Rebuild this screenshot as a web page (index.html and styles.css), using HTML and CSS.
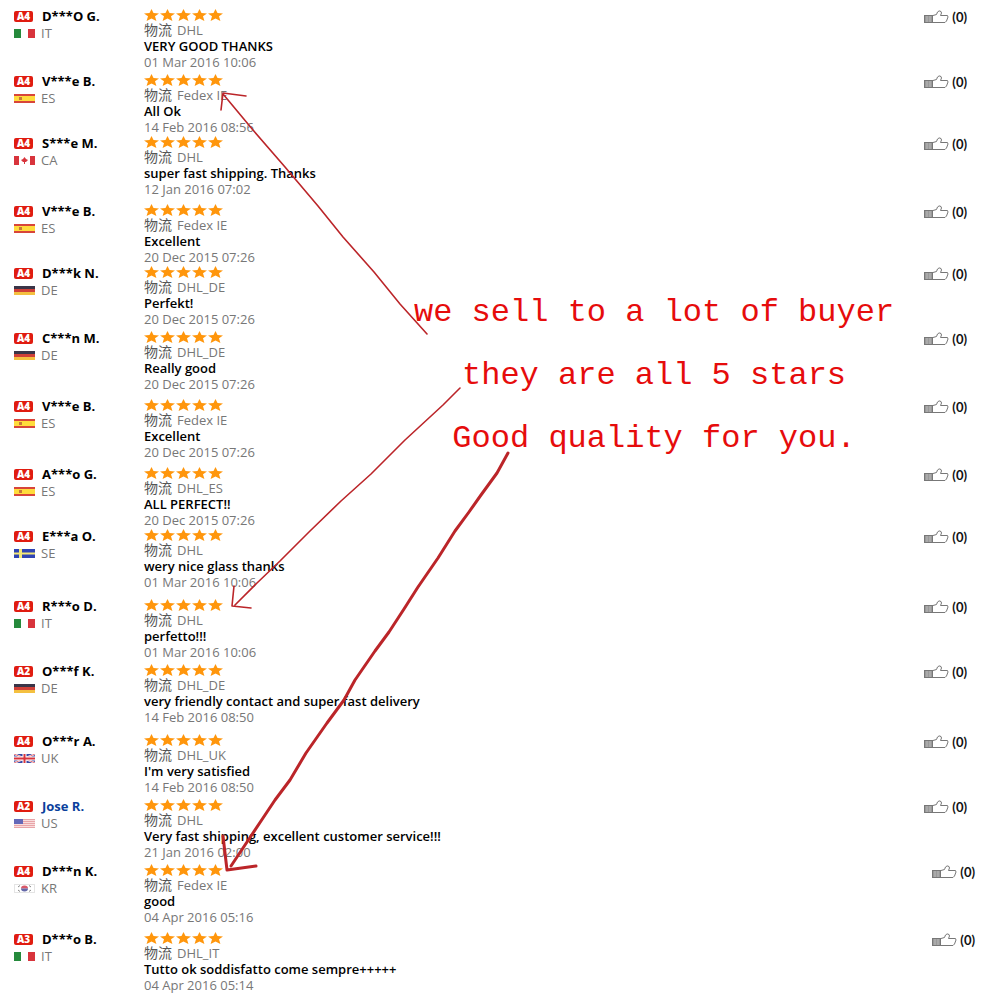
FILE: index.html
```html
<!DOCTYPE html>
<html lang="en">
<head>
  <meta charset="UTF-8">
  <meta name="viewport" content="width=device-width, initial-scale=1.0">
  <title>Buyer Feedback</title>
  <link rel="stylesheet" href="styles.css">
</head>
<body>
  <!-- Shared icons -->
  <svg class="sprite" aria-hidden="true">
    <symbol id="star" viewBox="0 0 15 12" preserveAspectRatio="none">
      <path d="M7.5 0L9.5 4L15 4.4L11 7.2L12.4 12L7.5 9.6L2.6 12L4 7.2L0 4.4L5.5 4Z" fill="#ff960c"/>
    </symbol>
    <symbol id="thumb" viewBox="0 0 25 14">
      <path d="M9 5.5L12.5 4.5L13.5 2Q15 0 17 1.5L17.5 3L16.5 5.5H23.5L24 7L22.5 11L21 12.5H9" fill="#fff" stroke="#777"/>
      <rect x="0.5" y="5.5" width="8" height="7" fill="#999" stroke="#777"/>
      <path d="M3 6V12M6 6V12" stroke="#bbb"/>
    </symbol>
    <symbol id="flag-IT" viewBox="0 0 21 9" preserveAspectRatio="none">
      <rect width="21" height="9" fill="#fff"/>
      <rect width="7" height="9" fill="#258a3c"/>
      <rect x="14" width="7" height="9" fill="#d8343c"/>
    </symbol>
    <symbol id="flag-ES" viewBox="0 0 21 9" preserveAspectRatio="none">
      <rect width="21" height="9" fill="#d8453a"/>
      <rect y="2" width="21" height="5" fill="#ffdc3c"/>
      <rect x="5" y="3" width="3" height="3" fill="#c87838"/>
    </symbol>
    <symbol id="flag-CA" viewBox="0 0 21 9" preserveAspectRatio="none">
      <rect width="21" height="9" fill="#fff"/>
      <path d="M0 0H5V9H0ZM16 0H21V9H16ZM10.5 1L12 3L14 4L12 6H11V8H10V6H9L7 4L9 3Z" fill="#d8343c"/>
    </symbol>
    <symbol id="flag-DE" viewBox="0 0 21 9" preserveAspectRatio="none">
      <rect width="21" height="3" fill="#3a3548"/>
      <rect y="3" width="21" height="3" fill="#d04038"/>
      <rect y="6" width="21" height="3" fill="#f4c040"/>
    </symbol>
    <symbol id="flag-SE" viewBox="0 0 21 9" preserveAspectRatio="none">
      <rect width="21" height="9" fill="#2f44b4"/>
      <path d="M5 0H8V9H5ZM0 3.5H21V5.5H0Z" fill="#f4e878"/>
    </symbol>
    <symbol id="flag-UK" viewBox="0 0 21 9" preserveAspectRatio="none">
      <rect width="21" height="9" fill="#3a48a4"/>
      <path d="M0 0L21 9M21 0L0 9" stroke="#fff" stroke-width="2"/>
      <path d="M0 0L21 9M21 0L0 9" stroke="#d8343c" stroke-width="0.7"/>
      <path d="M10.5 0V9M0 4.5H21" stroke="#fff" stroke-width="4"/>
      <path d="M10.5 0V9M0 4.5H21" stroke="#d8343c" stroke-width="2"/>
    </symbol>
    <symbol id="flag-US" viewBox="0 0 21 9" preserveAspectRatio="none">
      <rect width="21" height="9" fill="#f8dcdc"/>
      <path d="M0 0.5H21M0 2.5H21M0 4.5H21M0 6.5H21M0 8.5H21" stroke="#e8a4a8"/>
      <rect width="9" height="5" fill="#6468b8"/>
    </symbol>
    <symbol id="flag-KR" viewBox="0 0 21 9" preserveAspectRatio="none">
      <rect x="0.5" y="0.5" width="20" height="8" fill="#fff" stroke="#e4e4e4"/>
      <path d="M4 3L6 1.5M4 6L6 7.5M15 1.5L17 3M15 7.5L17 6" stroke="#888"/>
      <path d="M7 4.5A3.5 3 0 0 1 14 4.5Z" fill="#d85868"/>
      <path d="M7 4.5A3.5 3 0 0 0 14 4.5Z" fill="#6468a8"/>
    </symbol>
  </svg>

  <main class="page">
    <ul id="feedbackList" class="feedback-list"></ul>

    <!-- Seller note drawn over the list -->
    <div class="note">
      <p>we sell to a lot of buyer</p>
      <p>they are all 5 stars</p>
      <p>Good quality for you.</p>
    </div>
    <svg class="arrows" viewBox="0 0 1000 1000" aria-hidden="true">
      <g fill="none" stroke="#bb2529" stroke-linecap="round" stroke-linejoin="round">
        <path d="M427 334L400 304L374 272L343 237L318 206L285 167L253 130L223 94M221 110L223 93L246 96" stroke-width="1.6"/>
        <path d="M460 388L443 405L405 440L371 474L341 501L310 531L280 561L257 583L235 605M234 586L232 606L251 608" stroke-width="1.6"/>
        <path d="M508 453L497 473L481 495L469 512L455 531L438 558L418 587L404 609L389 632L375 651L355 680L344 700L327 723L306 753L290 780L275 800L263 818L247 842L231 866" stroke-width="3"/>
        <path d="M223 836L227 870L256 866" stroke-width="3"/>
      </g>
    </svg>
  </main>

  <script src="script.js"></script>
</body>
</html>
```
FILE: styles.css
```css
* {
  box-sizing: border-box;
}

body {
  margin: 0;
  background-color: #fff;
  color: #111;
  font-family: "Open Sans", "Noto Sans CJK SC", sans-serif;
  font-size: 13px;
  line-height: 16px;
}

p {
  margin: 0;
}

.sprite {
  display: none;
}

.page {
  position: relative;
  padding: 8px 33px 8px 14px;
}

.feedback-list {
  list-style: none;
  margin: 0;
  padding: 0;
}

.feedback {
  display: flex;
}

/* Space below a row */
.gap-small {
  margin-bottom: 3px;
}

.gap-medium {
  margin-bottom: 6px;
}

.gap-large {
  margin-bottom: 8px;
}

/* Buyer */
.buyer {
  flex: 0 0 130px;
}

.buyer-line {
  display: flex;
  align-items: center;
  gap: 9px;
  height: 16px;
  white-space: nowrap;
}

.buyer-country {
  gap: 6px;
  height: 18px;
  color: #777;
}

.level {
  width: 19px;
  height: 11px;
  border-radius: 2px;
  background-color: #e01c10;
  color: #fff;
  font-size: 10px;
  font-weight: 800;
  line-height: 11px;
  text-align: center;
}

.buyer-name {
  color: #000;
  font-weight: 700;
  text-decoration: none;
}

a.buyer-name {
  color: #0a3f9c;
}

.flag {
  width: 21px;
  height: 9px;
}

/* Feedback text */
.feedback-body {
  flex: 1;
}

.stars {
  display: flex;
  align-items: center;
  gap: 1px;
  height: 14px;
}

.stars svg {
  width: 15px;
  height: 12px;
}

.shipping {
  display: flex;
  align-items: center;
  gap: 5px;
  height: 16px;
  color: #777;
}

.shipping span {
  color: #555;
  font-size: 14px;
}

.comment {
  color: #000;
  font-weight: 600;
}

.date {
  color: #777;
}

/* Like button */
.like {
  display: flex;
  align-items: center;
  align-self: flex-start;
  gap: 3px;
  height: 18px;
  padding: 0;
  border: 0;
  background: none;
  color: #111;
  font-family: Lato, sans-serif;
  font-size: 13px;
  font-weight: 700;
  cursor: pointer;
}

.like svg {
  width: 25px;
  height: 14px;
}

.shifted .like {
  margin-right: -8px;
}

/* Seller note */
.note {
  position: absolute;
  top: 281px;
  left: 414px;
  width: 480px;
  color: #e60c0c;
  font-family: "Liberation Mono", monospace;
  font-size: 32px;
  line-height: 63px;
  text-align: center;
  white-space: nowrap;
}

.arrows {
  position: absolute;
  top: 0;
  left: 0;
  width: 1000px;
  height: 1000px;
  pointer-events: none;
}
```
FILE: script.js
```js
var feedback = [
  { level: "A4", name: "D***O G.", country: "IT", ship: "DHL", text: "VERY GOOD THANKS", date: "01 Mar 2016 10:06", css: "gap-small" },
  { level: "A4", name: "V***e B.", country: "ES", ship: "Fedex IE", text: "All Ok", date: "14 Feb 2016 08:56", css: "" },
  { level: "A4", name: "S***e M.", country: "CA", ship: "DHL", text: "super fast shipping. Thanks", date: "12 Jan 2016 07:02", css: "gap-medium" },
  { level: "A4", name: "V***e B.", country: "ES", ship: "Fedex IE", text: "Excellent", date: "20 Dec 2015 07:26", css: "" },
  { level: "A4", name: "D***k N.", country: "DE", ship: "DHL_DE", text: "Perfekt!", date: "20 Dec 2015 07:26", css: "gap-small" },
  { level: "A4", name: "C***n M.", country: "DE", ship: "DHL_DE", text: "Really good", date: "20 Dec 2015 07:26", css: "gap-medium" },
  { level: "A4", name: "V***e B.", country: "ES", ship: "Fedex IE", text: "Excellent", date: "20 Dec 2015 07:26", css: "gap-medium" },
  { level: "A4", name: "A***o G.", country: "ES", ship: "DHL_ES", text: "ALL PERFECT!!", date: "20 Dec 2015 07:26", css: "" },
  { level: "A4", name: "E***a O.", country: "SE", ship: "DHL", text: "wery nice glass thanks", date: "01 Mar 2016 10:06", css: "gap-large" },
  { level: "A4", name: "R***o D.", country: "IT", ship: "DHL", text: "perfetto!!!", date: "01 Mar 2016 10:06", css: "gap-small" },
  { level: "A2", name: "O***f K.", country: "DE", ship: "DHL_DE", text: "very friendly contact and super fast delivery", date: "14 Feb 2016 08:50", css: "gap-large" },
  { level: "A4", name: "O***r A.", country: "UK", ship: "DHL_UK", text: "I'm very satisfied", date: "14 Feb 2016 08:50", css: "gap-small" },
  { level: "A2", name: "Jose R.", link: true, country: "US", ship: "DHL", text: "Very fast shipping, excellent customer service!!!", date: "21 Jan 2016 02:00", css: "gap-small" },
  { level: "A4", name: "D***n K.", country: "KR", ship: "Fedex IE", text: "good", date: "04 Apr 2016 05:16", css: "gap-medium shifted" },
  { level: "A3", name: "D***o B.", country: "IT", ship: "DHL_IT", text: "Tutto ok soddisfatto come sempre+++++", date: "04 Apr 2016 05:14", css: "shifted" }
];

var html = "";
for (var i = 0; i < feedback.length; i++) {
  var item = feedback[i];
  var name = item.link
    ? '<a class="buyer-name" href="#">' + item.name + '</a>'
    : '<span class="buyer-name">' + item.name + '</span>';

  html += '<li class="feedback ' + item.css + '">' +
    '<div class="buyer">' +
      '<div class="buyer-line"><span class="level">' + item.level + '</span>' + name + '</div>' +
      '<div class="buyer-line buyer-country"><svg class="flag"><use href="#flag-' + item.country + '"/></svg>' + item.country + '</div>' +
    '</div>' +
    '<div class="feedback-body">' +
      '<div class="stars" role="img" aria-label="5 stars">' + '<svg><use href="#star"/></svg>'.repeat(5) + '</div>' +
      '<p class="shipping"><span>物流</span> ' + item.ship + '</p>' +
      '<p class="comment">' + item.text + '</p>' +
      '<p class="date">' + item.date + '</p>' +
    '</div>' +
    '<button class="like" type="button" aria-label="Helpful (0)"><svg><use href="#thumb"/></svg>(0)</button>' +
    '</li>';
}
document.getElementById("feedbackList").innerHTML = html;
```
